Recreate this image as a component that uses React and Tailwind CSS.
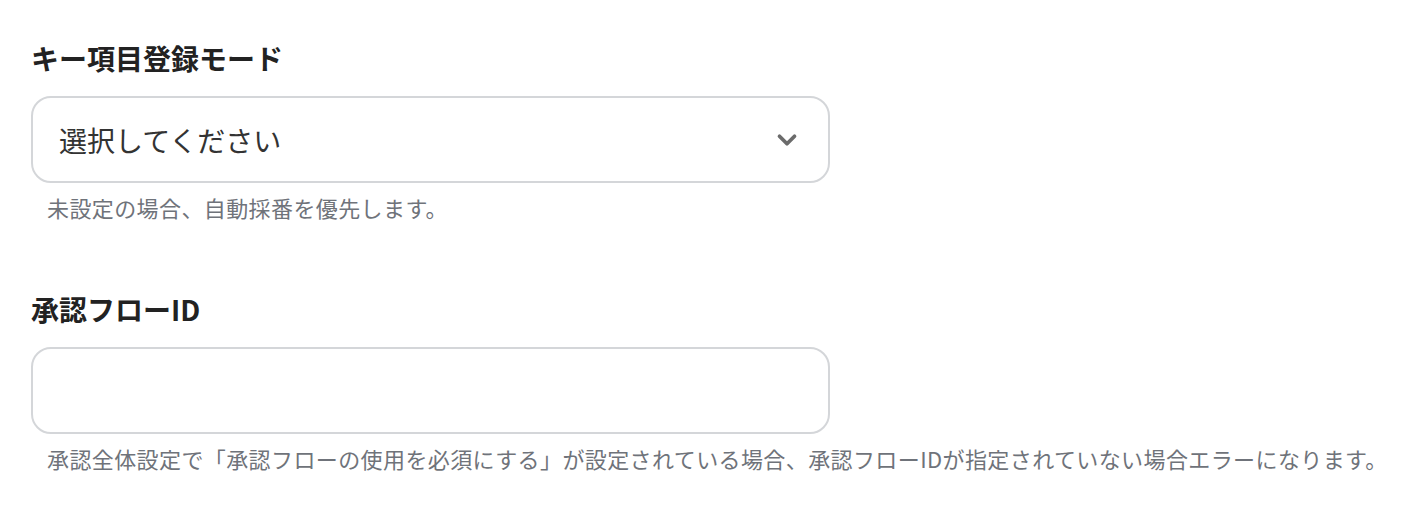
import { ChevronDown } from "lucide-react";

const font = { fontFamily: '"Noto Sans CJK JP", "Noto Sans", sans-serif' };

function Field({ label, help, children, className = "" }) {
  return (
    <section className={className}>
      <label className="block text-[28px] font-bold leading-[40px] text-[#222222]">
        {label}
      </label>
      <div className="mt-[18px]">{children}</div>
      <p className="mt-[8px] pl-4 text-[22px] leading-[32px] tracking-[0.4px] text-[#6f737a]">
        {help}
      </p>
    </section>
  );
}

export default function App() {
  return (
    <div className="min-h-[510px] bg-white pl-[31px] pt-[38px]" style={font}>
      <Field
        label="キー項目登録モード"
        help="未設定の場合、自動採番を優先します。"
      >
        <div className="flex h-[87px] w-[799px] items-center justify-between rounded-[20px] border-2 border-[#d4d6d9] bg-white pl-[26px] pr-[26px]">
          <span className="text-[28px] text-[#333333]">選択してください</span>
          <ChevronDown className="h-[30px] w-[30px] text-[#6b6b6b]" strokeWidth={3} />
        </div>
      </Field>
      <Field
        className="mt-[66px]"
        label="承認フローID"
        help="承認全体設定で「承認フローの使用を必須にする」が設定されている場合、承認フローIDが指定されていない場合エラーになります。"
      >
        <input
          type="text"
          className="block h-[87px] w-[799px] rounded-[20px] border-2 border-[#d4d6d9] bg-white px-[28px] text-[28px] outline-none"
        />
      </Field>
    </div>
  );
}
